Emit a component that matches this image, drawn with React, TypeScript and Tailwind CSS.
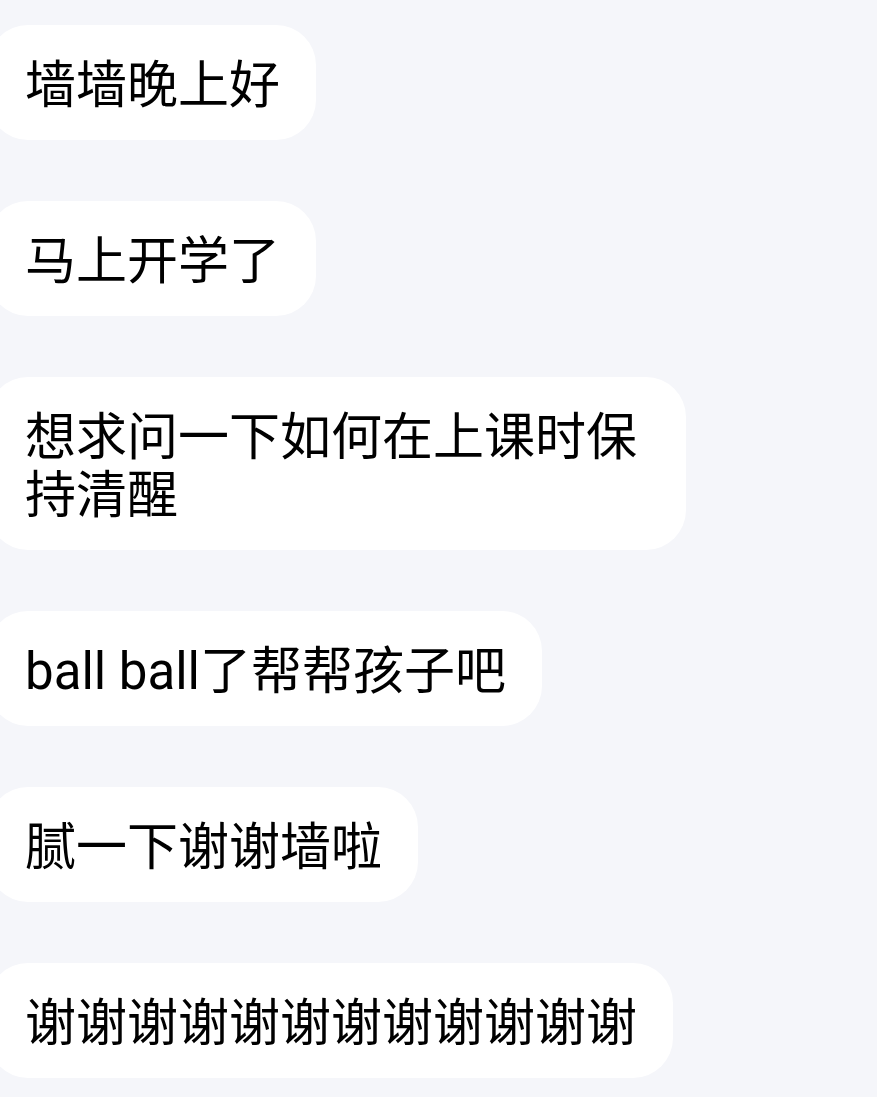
const messages = [
  '墙墙晚上好',
  '马上开学了',
  '想求问一下如何在上课时保持清醒',
  'ball ball了帮帮孩子吧',
  '腻一下谢谢墙啦',
  '谢谢谢谢谢谢谢谢谢谢谢谢',
]

export default function App() {
  return (
    <div
      className="min-h-screen w-full overflow-hidden bg-[#f5f6fa] pt-[25px]"
      style={{ fontFamily: 'Roboto, "Noto Sans CJK SC", sans-serif' }}
    >
      <div className="flex flex-col items-start gap-[61px]">
        {messages.map((m, i) => (
          <div
            key={i}
            className="-ml-[12px] max-w-[698px] rounded-[40px] bg-white pt-[32px] pb-[25px] pl-[37px] pr-[36px] text-[51px] leading-[58px] text-black"
          >
            {m}
          </div>
        ))}
      </div>
    </div>
  )
}
